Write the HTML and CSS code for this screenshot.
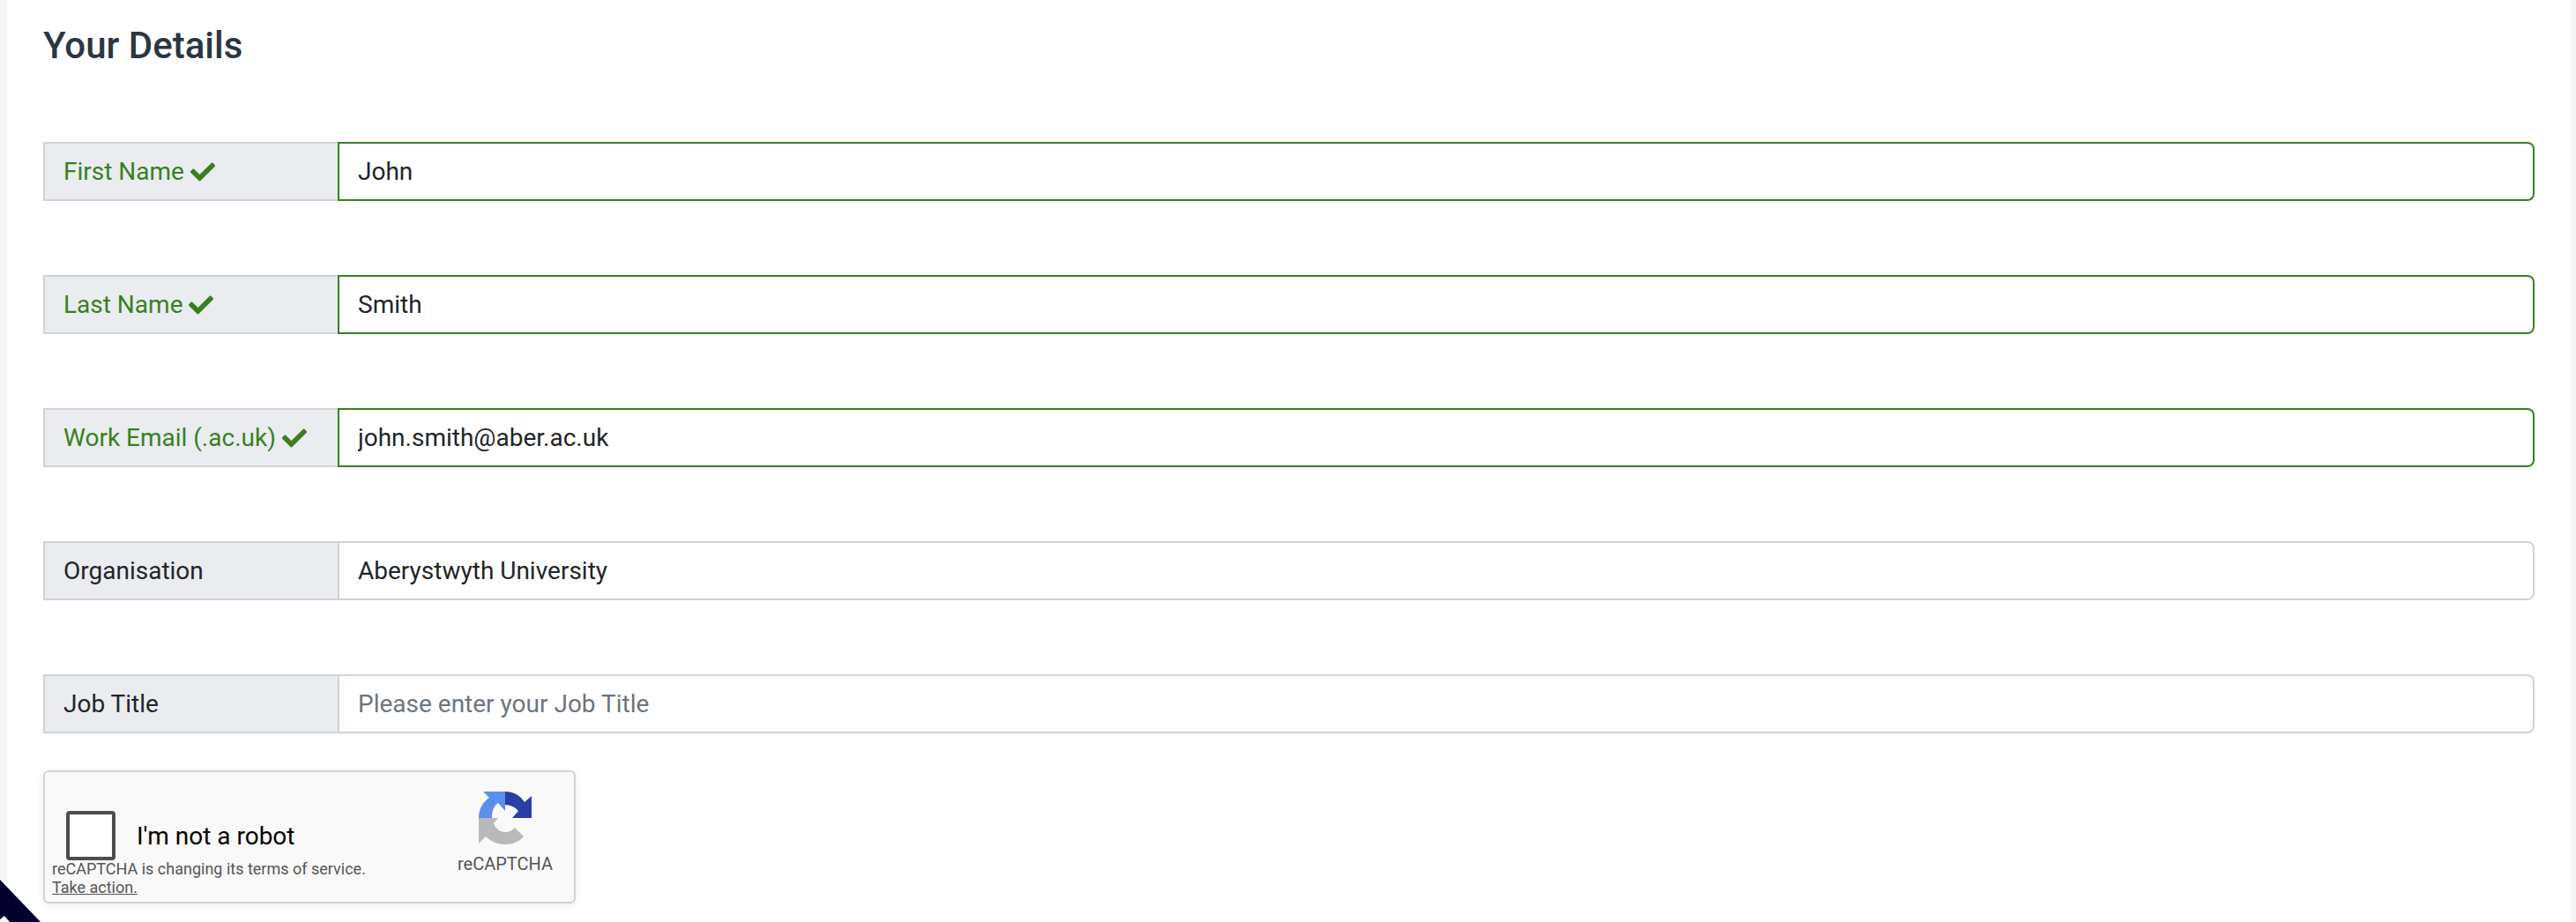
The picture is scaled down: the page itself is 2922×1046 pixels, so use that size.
FILE: index.html
```html
<!DOCTYPE html>
<html lang="en">
<head>
    <meta charset="UTF-8">
    <meta name="viewport" content="width=device-width, initial-scale=1.0">
    <title>Your Details</title>
    <link rel="stylesheet" href="styles.css">
</head>
<body>

    <div class="panel">
        <h2 class="title">Your Details</h2>

        <div class="field valid">
            <label class="field-label" for="firstName">First Name
                <svg class="tick" viewBox="0 0 512 512"><path d="M173.898 439.404l-166.4-166.4c-9.997-9.997-9.997-26.206 0-36.204l36.203-36.204c9.997-9.998 26.207-9.998 36.204 0L192 312.69 432.095 72.596c9.997-9.997 26.207-9.997 36.204 0l36.203 36.204c9.997 9.997 9.997 26.206 0 36.204l-294.4 294.401c-9.998 9.997-26.207 9.997-36.204-.001z"/></svg>
            </label>
            <input class="field-input" id="firstName" type="text" value="John">
        </div>

        <div class="field valid">
            <label class="field-label" for="lastName">Last Name
                <svg class="tick" viewBox="0 0 512 512"><path d="M173.898 439.404l-166.4-166.4c-9.997-9.997-9.997-26.206 0-36.204l36.203-36.204c9.997-9.998 26.207-9.998 36.204 0L192 312.69 432.095 72.596c9.997-9.997 26.207-9.997 36.204 0l36.203 36.204c9.997 9.997 9.997 26.206 0 36.204l-294.4 294.401c-9.998 9.997-26.207 9.997-36.204-.001z"/></svg>
            </label>
            <input class="field-input" id="lastName" type="text" value="Smith">
        </div>

        <div class="field valid">
            <label class="field-label" for="workEmail">Work Email (.ac.uk)
                <svg class="tick" viewBox="0 0 512 512"><path d="M173.898 439.404l-166.4-166.4c-9.997-9.997-9.997-26.206 0-36.204l36.203-36.204c9.997-9.998 26.207-9.998 36.204 0L192 312.69 432.095 72.596c9.997-9.997 26.207-9.997 36.204 0l36.203 36.204c9.997 9.997 9.997 26.206 0 36.204l-294.4 294.401c-9.998 9.997-26.207 9.997-36.204-.001z"/></svg>
            </label>
            <input class="field-input" id="workEmail" type="text" value="john.smith@aber.ac.uk">
        </div>

        <div class="field">
            <label class="field-label" for="organisation">Organisation</label>
            <input class="field-input" id="organisation" type="text" value="Aberystwyth University">
        </div>

        <div class="field last">
            <label class="field-label" for="jobTitle">Job Title</label>
            <input class="field-input" id="jobTitle" type="text" placeholder="Please enter your Job Title">
        </div>

        <div class="captcha">
            <div class="captcha-main">
                <div class="captcha-row">
                    <span class="captcha-box"></span>
                    <span class="captcha-text">I'm not a robot</span>
                </div>
                <div class="captcha-notice">
                    reCAPTCHA is changing its terms of service.<br>
                    <a href="#">Take action.</a>
                </div>
            </div>
            <div class="captcha-brand">
                <svg class="captcha-logo" viewBox="0 0 60 60">
                    <path fill="#b9b9b9" d="M0 30H22L17 36C19 42 24 46 30 46C35 46 38 44 41 41L51 51C46 57 38 60 30 60C21 60 13 56 8 51L0 59Z"/>
                    <path fill="#5b8eef" d="M5 0H30V22L22 13C17 16 15 22 15 30H0C0 21 4 12 12 7Z"/>
                    <path fill="#2a3ea6" d="M30 0C39 0 47 4 52 12L60 5V30H38L45 22C42 18 36 15 30 15Z"/>
                </svg>
                <span class="captcha-label">reCAPTCHA</span>
            </div>
        </div>
    </div>

    <svg class="corner" viewBox="0 0 46 48"><path d="M0 0L46 48H11L5 41L0 45Z"/></svg>

</body>
</html>
```

FILE: styles.css
```css
html, body {
    height: 100%;
}

body {
    font-family: Roboto, 'Liberation Sans', sans-serif;
    background-color: #f5f5f5;
    margin: 0;
    overflow: hidden;
    position: relative;
}

.panel {
    background-color: #fff;
    margin: 0 6px 0 8px;
    padding: 24px 41px 0;
    height: 100%;
    box-sizing: border-box;
}

.title {
    margin: 0 0 84px;
    height: 53px;
    font-size: 42px;
    line-height: 55px;
    font-weight: 500;
    color: #2c3643;
}

.field {
    display: flex;
    height: 67px;
    margin-bottom: 84px;
    font-size: 28px;
}

.field.last {
    margin-bottom: 42px;
}

.field-label {
    width: 334px;
    box-sizing: border-box;
    padding: 0 21px;
    display: flex;
    align-items: center;
    gap: 7px;
    background-color: #eaecf0;
    border: 2px solid #ced3db;
    border-right: none;
    color: #212529;
}

.field-input {
    flex: 1;
    min-width: 0;
    padding: 0 21px;
    font-family: inherit;
    font-size: 28px;
    color: #212529;
    border: 2px solid #ced3db;
    border-radius: 0 8px 8px 0;
    outline: none;
}

.field-input::placeholder {
    color: #6c757d;
    opacity: 1;
}

.valid .field-label {
    color: #38801f;
}

.valid .field-input {
    border-color: #38801f;
}

.tick {
    width: 28px;
    height: 28px;
    fill: #38801f;
}

.captcha {
    display: flex;
    justify-content: space-between;
    width: 604px;
    height: 151px;
    box-sizing: border-box;
    background-color: #f9f9f9;
    border: 2px solid #d3d3d3;
    border-radius: 6px;
    box-shadow: 0 2px 8px rgba(0, 0, 0, 0.08);
}

.captcha-main {
    display: flex;
    flex-direction: column;
    padding: 44px 0 0 8px;
}

.captcha-row {
    display: flex;
    align-items: center;
    gap: 24px;
    margin-left: 16px;
    height: 56px;
}

.captcha-box {
    width: 56px;
    height: 56px;
    box-sizing: border-box;
    background-color: #fff;
    border: 4.5px solid #4d4d4d;
    border-radius: 4px;
}

.captcha-text {
    font-size: 28px;
    color: #000;
}

.captcha-notice {
    font-size: 18px;
    line-height: 21px;
    margin-top: -1px;
    color: #555;
}

.captcha-notice a {
    color: #555;
}

.captcha-brand {
    display: flex;
    flex-direction: column;
    align-items: center;
    width: 108px;
    margin-right: 24px;
    padding-top: 22px;
}

.captcha-logo {
    width: 60px;
    height: 60px;
    display: block;
}

.captcha-label {
    font-size: 20px;
    margin-top: 10px;
    color: #555;
}

.corner {
    position: absolute;
    left: 0;
    bottom: 0;
    width: 46px;
    height: 48px;
    fill: #03002e;
}
```
